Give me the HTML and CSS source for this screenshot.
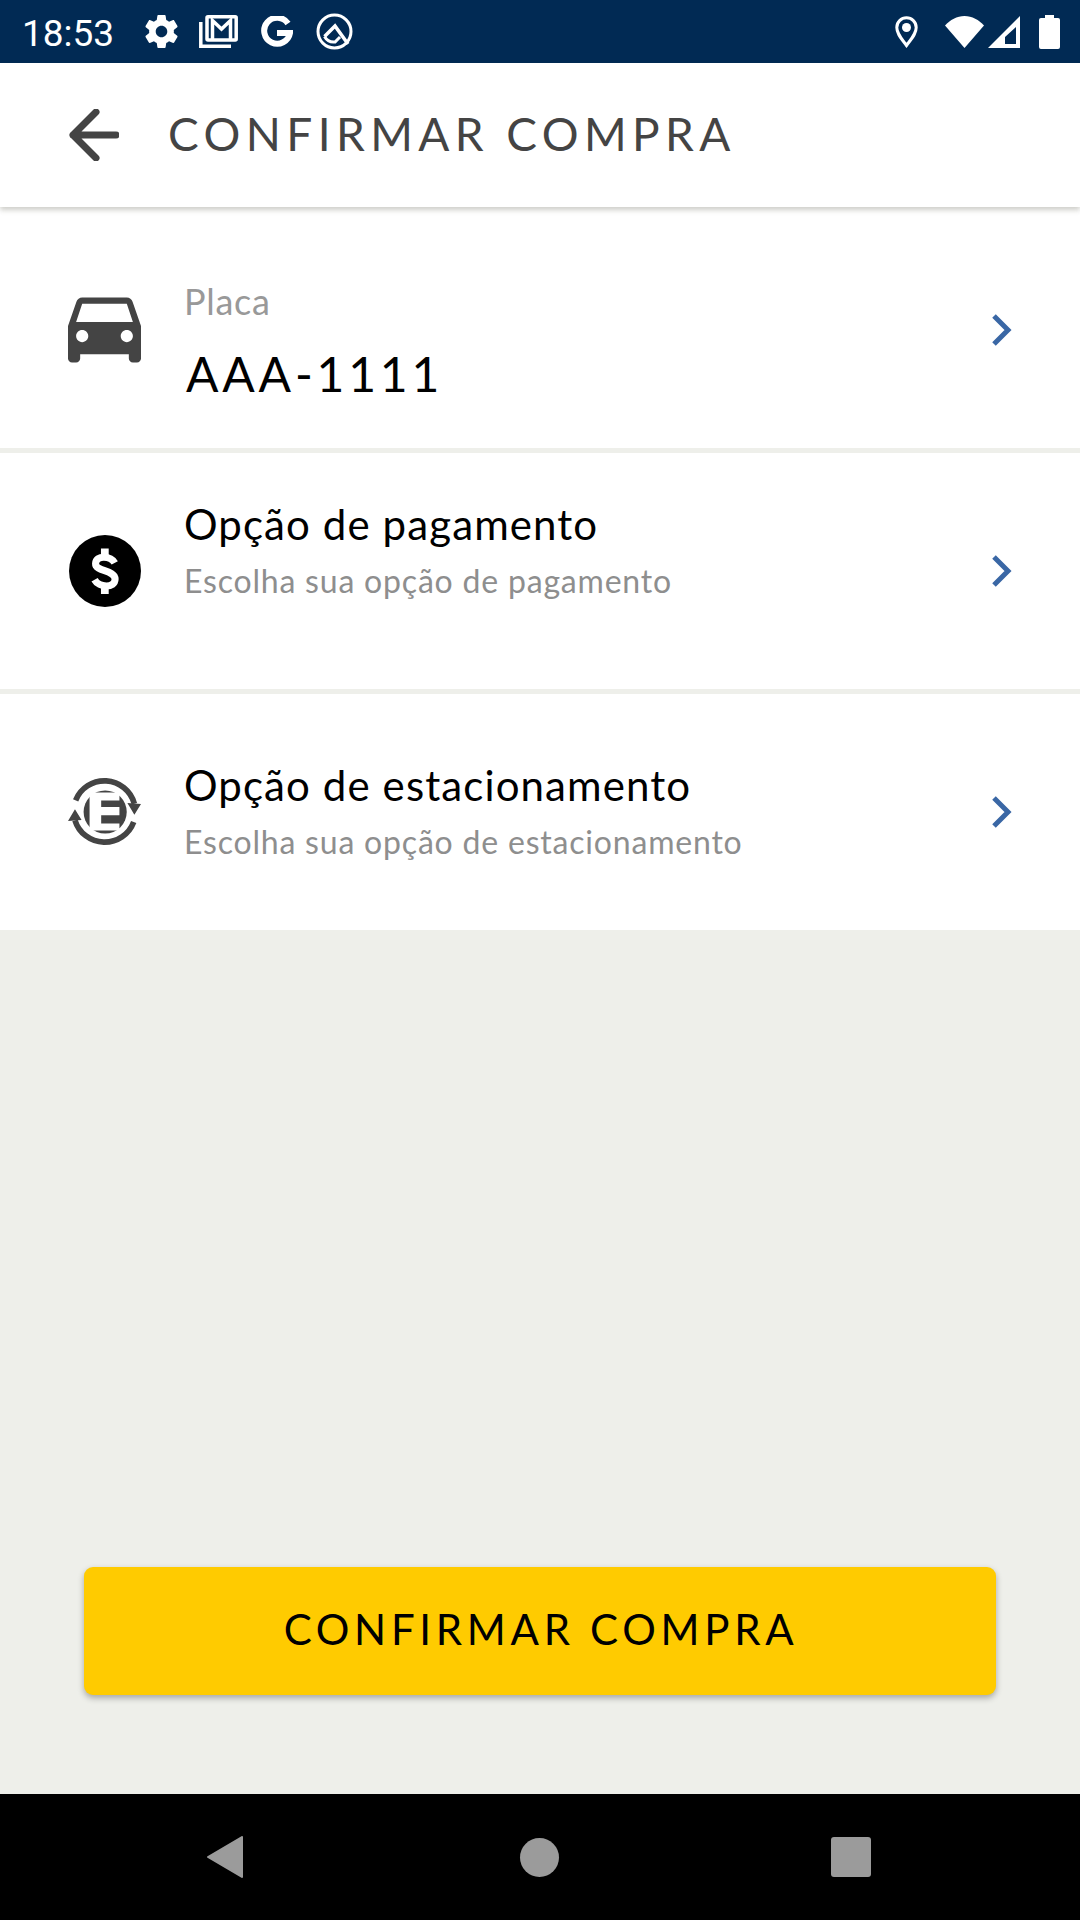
FILE: index.html
```html
<!DOCTYPE html>
<html>
	<head>
		<meta charset="UTF-8">
		<title>Confirmar compra</title>
		<link rel="stylesheet" href="styles.css">
	</head>
	<body>
		<div class="screen">
			<div class="status-bar">
				<span class="clock">18:53</span>
				<svg class="ic-gear" viewBox="2 2 20 20"><path fill="#fff" d="M19.43 12.98c.04-.32.07-.64.07-.98s-.03-.66-.07-.98l2.11-1.65c.19-.15.24-.42.12-.64l-2-3.46c-.12-.22-.39-.3-.61-.22l-2.49 1c-.52-.4-1.08-.73-1.69-.98l-.38-2.65C14.46 2.18 14.25 2 14 2h-4c-.25 0-.46.18-.49.42l-.38 2.65c-.61.25-1.17.59-1.69.98l-2.49-1c-.23-.09-.49 0-.61.22l-2 3.46c-.13.22-.07.49.12.64l2.11 1.65c-.04.32-.07.65-.07.98s.03.66.07.98l-2.11 1.65c-.19.15-.24.42-.12.64l2 3.46c.12.22.39.3.61.22l2.49-1c.52.4 1.08.73 1.69.98l.38 2.65c.03.24.24.42.49.42h4c.25 0 .46-.18.49-.42l.38-2.65c.61-.25 1.17-.59 1.69-.98l2.49 1c.23.09.49 0 .61-.22l2-3.46c.12-.22.07-.49-.12-.64l-2.11-1.65zM12 15.5c-1.93 0-3.5-1.57-3.5-3.5s1.57-3.5 3.5-3.5 3.5 1.57 3.5 3.5-1.57 3.5-3.5 3.5z"/></svg>
				<svg class="ic-mail" viewBox="0 0 39 33" fill="none" stroke="#fff" stroke-width="3.500"><path d="M1.800 7v24.200H32"/><rect x="8" y="1.800" width="29.200" height="23.200" rx="1"/><path d="M13.500 25V5.500l9 8.500 9-8.500V25"/></svg>
				<svg class="ic-g" viewBox="0 0 33 32" fill="none" stroke="#fff" stroke-width="6"><path d="M28 7.500A13 13 0 1 0 30 17H17"/></svg>
				<svg class="ic-q" viewBox="0 0 37 37" fill="none" stroke="#fff" stroke-width="3"><circle cx="18.500" cy="18.500" r="16.500"/><path stroke-width="3.500" d="M8.500 23.500 19 13 32 31"/><path stroke-width="3" d="M8.500 23.500c2 3.500 6 6 10.500 5.500l5-5"/></svg>
				<div class="status-right">
					<svg class="ic-pin" viewBox="0 0 23 32"><path fill="none" stroke="#fff" stroke-width="3" d="M11.500 29.500C6 22 1.800 17.500 1.800 11.500a9.700 9.700 0 0 1 19.400 0c0 6-4.200 10.500-9.700 18z"/><circle fill="#fff" cx="11.500" cy="11.500" r="4.500"/></svg>
					<svg class="ic-wifi" viewBox="0 0 39 32"><path fill="#fff" d="M0 9.500C5 4 12 0 19.500 0S34 4 39 9.500L19.500 32z"/></svg>
					<svg class="ic-signal" viewBox="0 0 32 32"><path fill="#fff" fill-rule="evenodd" d="M0 32 32 0v32zM17 28h11V11L17 21z"/></svg>
					<svg class="ic-battery" viewBox="0 0 21 34"><path fill="#fff" d="M6 0h9v3h4a2 2 0 0 1 2 2v27a2 2 0 0 1-2 2H2a2 2 0 0 1-2-2V5a2 2 0 0 1 2-2h4z"/></svg>
				</div>
			</div>

			<div class="app-bar">
				<svg class="back" viewBox="0 0 50 52" fill="none" stroke="#444" stroke-width="7" stroke-linecap="round" stroke-linejoin="round"><path d="M47 26H4M27 3 4 26l23 23"/></svg>
				<h1 class="page-title">CONFIRMAR COMPRA</h1>
			</div>

			<div class="row row-first">
				<div class="row-icon">
					<svg class="ic-car" viewBox="3 5 18 16"><path fill="#444" d="M18.920 6.010C18.720 5.420 18.160 5 17.500 5h-11c-.66 0-1.210.42-1.420 1.010L3 12v8c0 .55.45 1 1 1h1c.55 0 1-.45 1-1v-1h12v1c0 .55.45 1 1 1h1c.55 0 1-.45 1-1v-8l-2.080-5.990zM6.500 16c-.83 0-1.500-.67-1.500-1.500S5.670 13 6.500 13s1.500.67 1.500 1.500S7.330 16 6.500 16zm11 0c-.83 0-1.500-.67-1.500-1.500s.67-1.500 1.500-1.500 1.500.67 1.500 1.500-.67 1.500-1.500 1.500zM5 11l1.500-4.500h11L19 11H5z"/></svg>
				</div>
				<div class="row-text text-plate">
					<div class="label">Placa</div>
					<div class="plate">AAA-1111</div>
				</div>
				<svg class="chevron" viewBox="0 0 20 32" fill="none" stroke="#3a67a5" stroke-width="5"><path d="M2 2l14 14L2 30"/></svg>
			</div>

			<div class="row">
				<div class="row-icon">
					<svg class="ic-money" viewBox="88 75 214 214">
						<circle cx="195" cy="182" r="107"/>
						<path fill="#fff" d="M183 115h23v28h-23zM183 222h23v28h-23z"/>
						<path fill="none" stroke="#fff" stroke-width="21" d="M224 158C212 136 168 134 167 160 166 184 224 178 225 206 225 234 177 232 164 208"/>
					</svg>
				</div>
				<div class="row-text text-up">
					<div class="title">Opção de pagamento</div>
					<div class="sub">Escolha sua opção de pagamento</div>
				</div>
				<svg class="chevron" viewBox="0 0 20 32" fill="none" stroke="#3a67a5" stroke-width="5"><path d="M2 2l14 14L2 30"/></svg>
			</div>

			<div class="row row-last">
				<div class="row-icon">
					<svg class="ic-park" viewBox="85 68 220 204">
						<g fill="none" stroke="#444" stroke-width="17">
							<path d="M108 135A93.500 93.500 0 0 1 285 145"/>
							<path d="M283 200A93.500 93.500 0 0 1 106 195"/>
						</g>
						<path fill="#444" d="M285 178 264 143 305 146zM106 162 85 197 126 194z"/>
						<circle fill="#444" cx="197" cy="170" r="65"/>
						<path fill="#fff" d="M150 111H240V135H185V155H240V180H185V205H240V226H150z"/>
					</svg>
				</div>
				<div class="row-text text-last">
					<div class="title">Opção de estacionamento</div>
					<div class="sub">Escolha sua opção de estacionamento</div>
				</div>
				<svg class="chevron" viewBox="0 0 20 32" fill="none" stroke="#3a67a5" stroke-width="5"><path d="M2 2l14 14L2 30"/></svg>
			</div>

			<div class="content">
				<button class="confirm">CONFIRMAR COMPRA</button>
			</div>

			<div class="nav-bar">
				<svg class="nav-back" viewBox="0 0 36 42"><path fill="#9b9b9b" stroke="#9b9b9b" stroke-width="2" stroke-linejoin="round" d="M35 1v40L1 21z"/></svg>
				<div class="nav-home"></div>
				<div class="nav-recent"></div>
			</div>
		</div>
	</body>
</html>
```

FILE: styles.css
```css
body{
	margin: 0;
	padding: 0;
	background: #eeefea;
	font-family: Lato, "Open Sans", sans-serif;
}
.screen{
	width: 1080px;
	height: 1920px;
	display: flex;
	flex-direction: column;
	overflow: hidden;
}
svg{
	display: block;
	flex: none;
}

/* status bar */
.status-bar{
	height: 63px;
	background: #012a54;
	display: flex;
	align-items: center;
	padding: 0 20px 0 22px;
	box-sizing: border-box;
}
.clock{
	font: 37px/42px Roboto, sans-serif;
	color: #fff;
	width: 123px;
	margin-top: 4px;
}
.ic-gear{
	width: 33px;
	height: 33px;
	margin-right: 21px;
}
.ic-mail{
	width: 39px;
	height: 33px;
	margin-right: 22px;
}
.ic-g{
	width: 33px;
	height: 32px;
	margin-right: 23px;
}
.ic-q{
	width: 37px;
	height: 37px;
}
.status-right{
	margin-left: auto;
	display: flex;
	align-items: center;
}
.ic-pin{
	width: 23px;
	height: 32px;
	margin-right: 27px;
}
.ic-wifi{
	width: 39px;
	height: 32px;
	margin-right: 4px;
}
.ic-signal{
	width: 32px;
	height: 32px;
	margin-right: 19px;
}
.ic-battery{
	width: 21px;
	height: 34px;
}

/* app bar */
.app-bar{
	height: 144px;
	background: #fff;
	display: flex;
	align-items: center;
	padding-left: 69px;
	box-shadow: 0 3px 5px rgba(60,60,40,.25);
	position: relative;
}
.back{
	width: 50px;
	height: 52px;
	margin-right: 49px;
}
.page-title{
	margin: 0 0 3px;
	font-size: 46px;
	font-weight: 400;
	letter-spacing: 5.4px;
	color: #444;
}

/* rows */
.row{
	height: 236px;
	background: #fff;
	display: flex;
	align-items: center;
	padding: 0 68px;
	box-sizing: border-box;
	margin-bottom: 5px;
}
.row-first{
	height: 241px;
	padding-top: 4px;
}
.row-last{
	margin-bottom: 0;
}
.row-icon{
	width: 116px;
	flex: none;
}
.row-text{
	flex: 1;
}
.text-plate{
	margin-top: 22px;
}
.text-up{
	margin-bottom: 44px;
}
.text-last{
	margin-bottom: 3px;
}
.label{
	font-size: 36px;
	letter-spacing: .7px;
	color: #999;
}
.plate{
	font-size: 48px;
	letter-spacing: 3.8px;
	color: #000;
	margin: 22px 0 0 2px;
}
.title{
	font-size: 42px;
	letter-spacing: 1.1px;
	color: #000;
}
.sub{
	font-size: 32px;
	letter-spacing: .8px;
	color: #8e8e8e;
	margin-top: 12px;
}
.chevron{
	width: 20px;
	height: 32px;
}
.ic-car{
	width: 73px;
	height: 66px;
}
.ic-money{
	width: 72px;
	height: 72px;
	margin-left: 1px;
}
.ic-park{
	width: 73px;
	height: 68px;
}

/* grey area + button */
.content{
	flex: 1;
	display: flex;
	align-items: flex-end;
	justify-content: center;
	padding-bottom: 99px;
}
.confirm{
	width: 912px;
	height: 128px;
	border: 0;
	border-radius: 9px;
	background: #ffcb00;
	box-shadow: 0 3px 6px rgba(0,0,0,.3);
	font-family: inherit;
	font-size: 42px;
	letter-spacing: 4.7px;
	color: #000;
	padding: 0 0 5px 2px;
}

/* nav bar */
.nav-bar{
	height: 126px;
	background: #000;
	display: flex;
	align-items: center;
	padding-left: 207px;
}
.nav-back{
	width: 36px;
	height: 42px;
	margin-right: 277px;
}
.nav-home{
	width: 39px;
	height: 39px;
	border-radius: 50%;
	background: #9b9b9b;
	margin-right: 272px;
}
.nav-recent{
	width: 40px;
	height: 40px;
	border-radius: 3px;
	background: #9b9b9b;
}
```
